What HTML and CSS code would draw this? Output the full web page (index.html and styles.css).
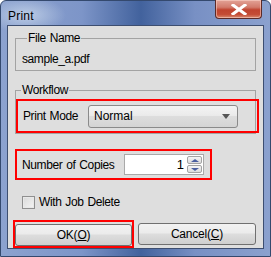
FILE: index.html
```html
<!DOCTYPE html>
<html>
<head>
<meta charset="utf-8">
<link rel="stylesheet" href="styles.css">
</head>
<body>
<div class="window">
  <div class="titlebar">
    <span class="title">Print</span>
    <div class="close">
      <svg width="16" height="11" viewBox="0 0 16 11"><path d="M2 1 L14 10 M14 1 L2 10" stroke="#fff" stroke-width="3" stroke-linecap="square"/></svg>
    </div>
  </div>
  <div class="client">
    <fieldset class="group file">
      <legend>File Name</legend>
      <div class="filename">sample_a.pdf</div>
    </fieldset>
    <fieldset class="group workflow">
      <legend>Workflow</legend>
      <div class="hl mode-row">
        <span class="label">Print Mode</span>
        <div class="select"><span>Normal</span><span class="arrow"></span></div>
      </div>
    </fieldset>
    <div class="hl copies-row">
      <span class="label">Number of Copies</span>
      <div class="spin">
        <span class="value">1</span>
        <div class="spin-btns">
          <div class="sbtn"><span class="tri up"></span></div>
          <div class="sbtn"><span class="tri down"></span></div>
        </div>
      </div>
    </div>
    <div class="check-row">
      <span class="checkbox"></span>
      <span class="label">With Job Delete</span>
    </div>
    <div class="buttons">
      <div class="hl okwrap"><div class="btn">OK(<u>O</u>)</div></div>
      <div class="btn cancel">Cancel(<u>C</u>)</div>
    </div>
  </div>
</div>
</body>
</html>
```

FILE: styles.css
```css
* { box-sizing: border-box; }
html, body { margin: 0; padding: 0; }
body {
  width: 271px; height: 257px; overflow: hidden;
  font-family: "Liberation Sans", Arial, sans-serif;
  font-size: 12px; color: #000;
}
.window {
  width: 271px; height: 257px;
  border: 1px solid #34496e;
  border-radius: 6px 6px 0 0;
  background:
    radial-gradient(ellipse 40px 18px at 25px 14px, rgba(200,215,235,0.8), rgba(200,215,235,0) 100%),
    linear-gradient(90deg, #8ca2cf 0%, #7d95c8 30%, #42629d 52%, #7890c4 72%, #8ba1ce 100%);
  display: flex; flex-direction: column;
  padding: 0 6px 7px 6px;
}
.titlebar {
  height: 28px; display: flex; justify-content: space-between; align-items: flex-start;
}
.title {
  margin-top: 8px; margin-left: 1px;
  font-family: "Liberation Sans", sans-serif; font-size: 12px; color: #000;
  letter-spacing: 0.2px;
}
.close {
  width: 47px; height: 19px; margin-right: 2px; margin-top: -1px;
  border: 1px solid #5b2a28; border-top: none;
  border-radius: 0 0 4px 4px;
  background: linear-gradient(#e3a397 0%, #d27b6c 40%, #c0432f 55%, #c44c35 80%, #d88a70 100%);
  display: flex; align-items: center; justify-content: center;
  box-shadow: inset 0 0 0 1px rgba(255,220,210,0.5);
}
.client {
  flex: 1;
  background: #dedede;
  border: 1px solid #3d4e70;
  padding: 0 7px;
  display: flex; flex-direction: column;
}
.group {
  margin: 0; padding: 0;
  border: 1px solid #a3a3a3;
}
.group legend {
  padding: 0 1px; margin-left: 5px;
  line-height: 12px; font-size: 12px;
  letter-spacing: -0.4px; word-spacing: 1px;
}
.file { margin-top: 6px; padding: 8px 6px 4px 6px; }
.filename { line-height: 14px; letter-spacing: -0.4px; }
.workflow { margin-top: 13px; padding: 3px 0 0 0; }
.hl { border: 2px solid #ff0000; }
.label { letter-spacing: -0.4px; word-spacing: 1px; }
.mode-row {
  height: 34px; margin-right: -4px;
  display: flex; align-items: center; padding-left: 5px;
}
.mode-row .label { width: 65px; }
.select {
  width: 150px; height: 23px;
  border: 1px solid #8a8a8a; border-radius: 3px;
  background: linear-gradient(#f3f3f3 0%, #ebebeb 45%, #dddddd 50%, #d4d4d4 100%);
  display: flex; align-items: center; justify-content: space-between;
  padding: 0 7px 0 5px;
}
.arrow {
  width: 0; height: 0;
  border-left: 4px solid transparent; border-right: 4px solid transparent;
  border-top: 5px solid #555;
}
.copies-row {
  margin-top: 15px; width: 197px; height: 31px;
  display: flex; align-items: center; padding-left: 5px;
}
.copies-row .label { width: 102px; }
.spin {
  width: 80px; height: 21px;
  border: 1px solid #a9a9a9; background: #fff;
  display: flex; align-items: center; justify-content: flex-end;
  padding: 1px;
}
.spin .value { margin-right: 3px; font-size: 13px; }
.spin-btns { width: 15px; height: 17px; display: flex; flex-direction: column; gap: 1px; }
.sbtn {
  flex: 1; border: 1px solid #a3a3a3; border-radius: 2px;
  background: linear-gradient(#f5f5f5, #dcdcdc);
  display: flex; align-items: center; justify-content: center;
}
.tri { width: 0; height: 0; border-left: 4px solid transparent; border-right: 4px solid transparent; }
.tri.up { border-bottom: 3px solid #4a5fa0; }
.tri.down { border-top: 3px solid #4a5fa0; }
.check-row {
  margin-top: 15px; display: flex; align-items: center; padding-left: 7px;
}
.checkbox {
  width: 13px; height: 13px; margin-right: 4px;
  border: 1px solid #8f8f8f;
  background: linear-gradient(135deg, #d9d9d9, #f4f4f4);
  box-shadow: inset 0 0 0 1px #e8e8e8;
}
.buttons {
  margin-top: 11px; margin-left: -2px; display: flex; align-items: center;
}
.okwrap { width: 121px; height: 28px; padding: 0; display: flex; }
.btn {
  height: 22px; width: 117px;
  border: 1px solid #707070; border-radius: 3px;
  background: linear-gradient(#f2f2f2 0%, #ebebeb 45%, #dddddd 50%, #cfcfcf 100%);
  display: flex; align-items: center; justify-content: center;
  letter-spacing: -0.2px;
}
.okwrap .btn { margin: 2px 0 0 0; width: 117px; }
.cancel { width: 121px; margin-left: 4px; }
u { text-decoration-thickness: 1px; text-underline-offset: 1px; }
```
